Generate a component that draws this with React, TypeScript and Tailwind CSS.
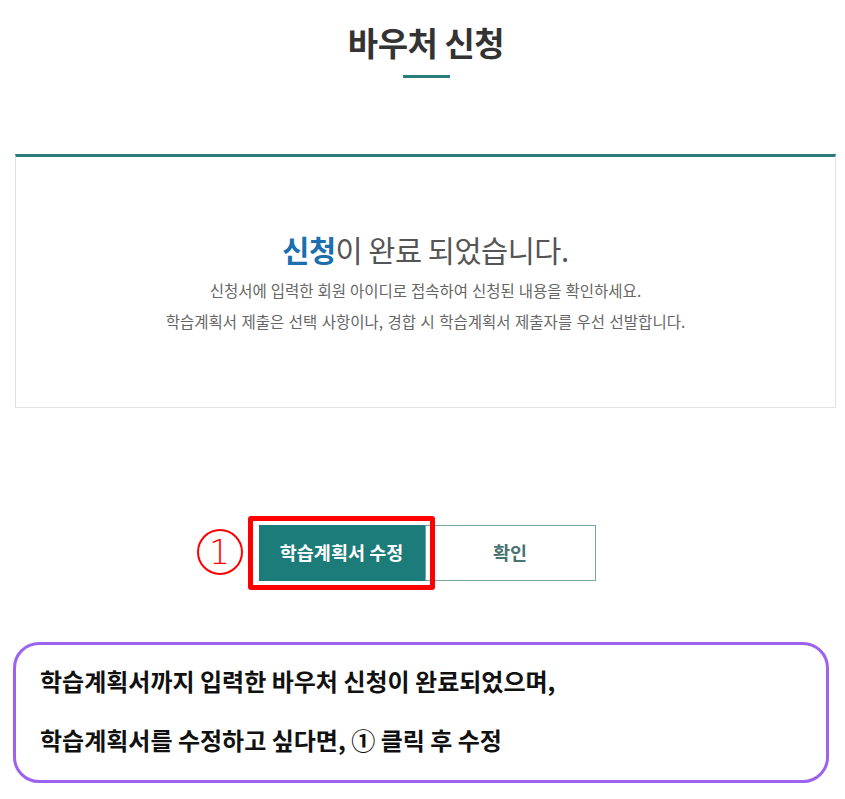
import React from "react";

export default function App() {
  return (
    <div className="w-[845px] h-[799px] bg-white font-['Noto_Sans_CJK_KR','Noto_Sans',sans-serif] overflow-hidden">
      {/* Title */}
      <div className="pt-[22px] pl-[7px] flex flex-col items-center">
        <h1 className="text-[33px] leading-[40px] font-bold text-[#333333] tracking-[-0.5px]">바우처 신청</h1>
        <div className="mt-[13px] w-[47px] h-[3px] bg-[#2a7f7d]" />
      </div>

      {/* Result box */}
      <div className="mt-[76px] ml-[15px] w-[821px] h-[254px] border border-[#e3e3e3] border-t-[3px] border-t-[#2b7d7b] flex flex-col items-center">
        <p className="mt-[72px] text-[29.5px] leading-[40px] text-[#555555] tracking-[-0.5px]">
          <span className="text-[#1b6fae] font-bold">신청</span>이 완료 되었습니다.
        </p>
        <p className="mt-[11px] text-[15.5px] leading-[20px] text-[#666666] [word-spacing:0.5px]">
          신청서에 입력한 회원 아이디로 접속하여 신청된 내용을 확인하세요.
        </p>
        <p className="mt-[11px] text-[15.5px] leading-[20px] text-[#666666] [word-spacing:1px]">
          학습계획서 제출은 선택 사항이나, 경합 시 학습계획서 제출자를 우선 선발합니다.
        </p>
      </div>

      {/* Buttons */}
      <div className="mt-[117px] flex justify-center pl-[9px]">
        <div className="relative">
          <button className="w-[166px] h-[56px] bg-[#1c7c7a] text-white text-[18.5px] font-bold">
            학습계획서 수정
          </button>
          <div className="absolute left-[-11px] top-[-9px] right-[-10px] bottom-[-9px] border-[5px] border-[#ff0000] rounded-[3px] pointer-events-none" />
          <div className="absolute left-[-62px] top-[4px] w-[46px] h-[46px] rounded-full border-[2px] border-[#ff0000] flex items-center justify-center text-[#ff0000] text-[33px] leading-none font-['DejaVu_Sans',sans-serif] font-light">
            1
          </div>
        </div>
        <button className="w-[171px] h-[56px] bg-white border border-[#7aa5a5] text-[#4a7272] text-[18.5px] font-bold">
          확인
        </button>
      </div>

      {/* Callout */}
      <div className="mt-[61px] ml-[13px] w-[816px] h-[141px] border-[3px] border-[#9d63ee] rounded-[26px] pl-[24px] pt-[21px] text-[24px] leading-[30px] font-bold text-[#111111]">
        <p>학습계획서까지 입력한 바우처 신청이 완료되었으며,</p>
        <p className="mt-[29px]">학습계획서를 수정하고 싶다면, ① 클릭 후 수정</p>
      </div>
    </div>
  );
}
